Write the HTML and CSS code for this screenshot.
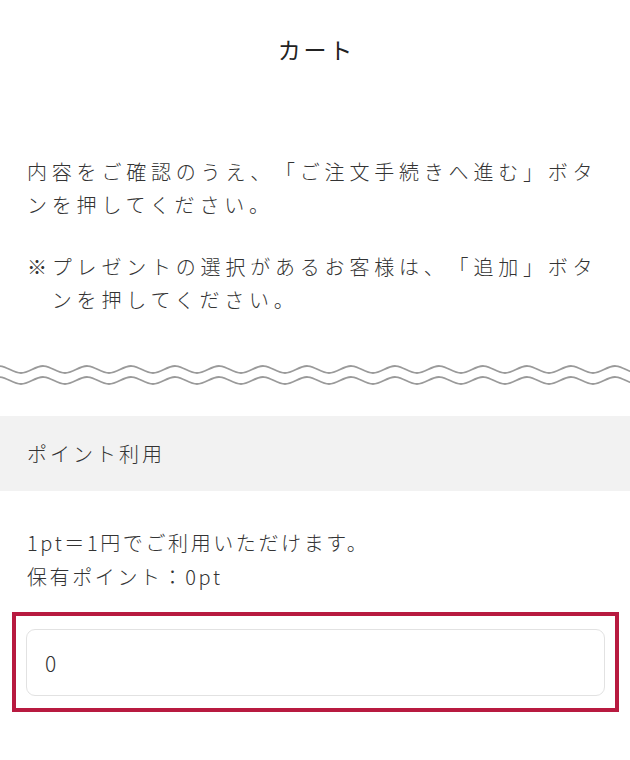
FILE: index.html
```html
<!DOCTYPE html>
<html lang="ja">

<head>
  <meta charset="UTF-8">
  <meta name="viewport" content="width=device-width, initial-scale=1.0">
  <title>カート</title>
  <link rel="stylesheet" href="styles.css">
</head>

<body>
  <header class="page-head">
    <h1 class="page-title">カート</h1>
  </header>

  <section class="notice">
    <p class="notice-text">内容をご確認のうえ、「ご注文手続きへ進む」ボタンを押してください。</p>
    <p class="notice-text notice-note">※プレゼントの選択があるお客様は、「追加」ボタンを押してください。</p>
  </section>

  <!-- 波線の区切り -->
  <div class="wave">
    <svg width="100%" height="24">
      <defs>
        <pattern id="wavePattern" x="0" y="0" width="44" height="24" patternUnits="userSpaceOnUse">
          <path d="M-23 10 C-15 10 -9 3 -1 3 C7 3 13 10 21 10 C29 10 35 3 43 3 C51 3 57 10 65 10" />
          <path d="M-23 21 C-15 21 -9 14 -1 14 C7 14 13 21 21 21 C29 21 35 14 43 14 C51 14 57 21 65 21" />
        </pattern>
      </defs>
      <rect width="100%" height="24" fill="url(#wavePattern)" />
    </svg>
  </div>

  <section class="point">
    <h2 class="point-head">ポイント利用</h2>
    <div class="point-body">
      <p class="point-info">1pt＝1円でご利用いただけます。<br>保有ポイント：0pt</p>
      <div class="point-field">
        <input class="point-input" type="text" value="0">
      </div>
    </div>
  </section>
</body>

</html>
```

FILE: styles.css
```css
body {
  margin: 0;
  font-family: "Noto Sans CJK JP", "Noto Sans", sans-serif;
  font-weight: 300;
  color: #333;
  background: #fff;
  text-spacing-trim: space-all;
}

p,
h1,
h2 {
  margin: 0;
  font-weight: 300;
}

.page-head {
  padding-top: 29px;
  text-align: center;
}

.page-title {
  font-size: 23px;
  line-height: 40px;
  letter-spacing: 0.12em;
  padding-left: 0.12em;
  color: #222;
  font-weight: 400;
}

.notice {
  padding: 86px 27px 0;
}

.notice-text {
  font-size: 20px;
  line-height: 33px;
  letter-spacing: 0.24em;
}

.notice-note {
  margin-top: 29px;
  padding-left: 24.8px;
  text-indent: -24.8px;
}

.wave {
  margin-top: 47px;
  height: 24px;
}

.wave svg {
  display: block;
}

.wave path {
  fill: none;
  stroke: #9a9a9a;
  stroke-width: 1.8;
}

.point {
  margin-top: 29px;
}

.point-head {
  background: #f2f2f2;
  padding: 0 27px;
  font-size: 20px;
  line-height: 75px;
  letter-spacing: 0.15em;
}

.point-body {
  padding: 35px 0 0;
}

.point-info {
  padding: 0 27px;
  font-size: 20px;
  line-height: 34px;
  letter-spacing: 0.13em;
}

.point-field {
  margin: 18px 11px 0 12px;
  border: 4px solid #b81a40;
  padding: 13px 10px 12px 10px;
}

.point-input {
  display: block;
  box-sizing: border-box;
  width: 100%;
  height: 67px;
  border: 1.5px solid #e2e2e2;
  border-radius: 9px;
  padding: 0 18px;
  font-family: "Noto Sans CJK JP", "Noto Sans", sans-serif;
  font-weight: 300;
  font-size: 21px;
  color: #333;
  outline: none;
}
```
